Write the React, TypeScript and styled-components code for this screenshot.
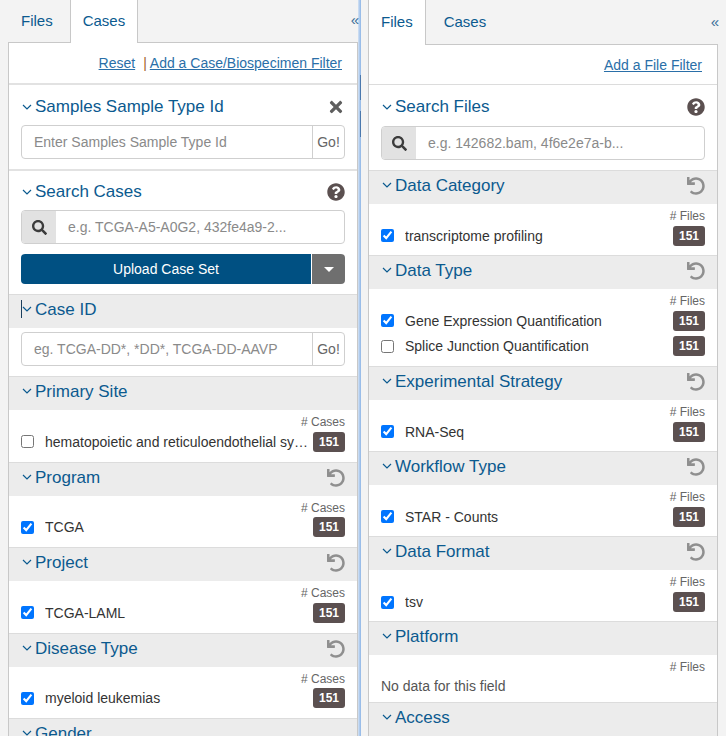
import { ReactNode } from "react";
import styled, { createGlobalStyle } from "styled-components";
import { FaQuestionCircle, FaSearch, FaTimes, FaUndo } from "react-icons/fa";

const GlobalStyle = createGlobalStyle`
  html, body {
    margin: 0;
    padding: 0;
    height: 736px;
    overflow: hidden;
    background: #f3f3f3;
    font-family: "Liberation Sans", Arial, sans-serif;
  }
`;

const Chevron = ({ focused }: { focused?: boolean }) => (
  <ChevronBox $focused={focused}>
    <svg width="10" height="6" viewBox="0 0 10 6" fill="none">
      <path d="M1 1l4 4 4-4" stroke="#0b5a8f" strokeWidth="1.2" />
    </svg>
  </ChevronBox>
);

const SectionTitle = ({
  label,
  gap,
  children,
}: {
  label: string;
  gap: number;
  children?: ReactNode;
}) => (
  <TitleRow $gap={gap}>
    <Chevron />
    <TitleText>{label}</TitleText>
    {children}
  </TitleRow>
);

type Row = { label: string; checked?: boolean };

const Facet = ({
  label,
  unit,
  rows,
  reset,
  tight,
}: {
  label: string;
  unit: string;
  rows: Row[];
  reset?: boolean;
  tight?: boolean;
}) => (
  <FacetBlock>
    <FacetHeader>
      <Chevron />
      <TitleText>{label}</TitleText>
      {reset && (
        <ResetIcon>
          <FaUndo size={18} />
        </ResetIcon>
      )}
    </FacetHeader>
    <FacetBody $tight={tight}>
      <UnitLabel># {unit}</UnitLabel>
      {rows.map((row) => (
        <FacetRow key={row.label}>
          <Check type="checkbox" checked={!!row.checked} readOnly />
          <RowLabel>{row.label}</RowLabel>
          <Count>151</Count>
        </FacetRow>
      ))}
    </FacetBody>
  </FacetBlock>
);

const SearchInput = ({ placeholder }: { placeholder: string }) => (
  <InputGroup>
    <SearchAddon>
      <FaSearch size={15} />
    </SearchAddon>
    <FieldText $inset={12}>{placeholder}</FieldText>
  </InputGroup>
);

const GoInput = ({ placeholder }: { placeholder: string }) => (
  <InputGroup>
    <FieldText $inset={12}>{placeholder}</FieldText>
    <GoButton>Go!</GoButton>
  </InputGroup>
);

export default function App() {
  return (
    <Page>
      <GlobalStyle />
      <Column>
        <TabBar>
          <Tab>Files</Tab>
          <Tab $active>Cases</Tab>
          <Collapse>«</Collapse>
        </TabBar>
        <Panel>
          <LinkBar>
            <PanelLink>Reset</PanelLink>
            <Pipe>|</Pipe>
            <PanelLink>Add a Case/Biospecimen Filter</PanelLink>
          </LinkBar>
          <PlainSection $height={86} $top={12} $ruled>
            <SectionTitle label="Samples Sample Type Id" gap={8}>
              <CloseIcon>
                <FaTimes size={18} />
              </CloseIcon>
            </SectionTitle>
            <GoInput placeholder="Enter Samples Sample Type Id" />
          </PlainSection>
          <PlainSection $height={123} $top={11}>
            <SectionTitle label="Search Cases" gap={8}>
              <HelpIcon>
                <FaQuestionCircle size={18} />
              </HelpIcon>
            </SectionTitle>
            <SearchInput placeholder="e.g. TCGA-A5-A0G2, 432fe4a9-2..." />
            <UploadRow>
              <UploadButton>Upload Case Set</UploadButton>
              <CaretButton>
                <Caret />
              </CaretButton>
            </UploadRow>
          </PlainSection>
          <FacetBlock>
            <FacetHeader>
              <Chevron focused />
              <TitleText>Case ID</TitleText>
            </FacetHeader>
            <CaseIdBody>
              <GoInput placeholder="eg. TCGA-DD*, *DD*, TCGA-DD-AAVP" />
            </CaseIdBody>
          </FacetBlock>
          <Facet
            label="Primary Site"
            unit="Cases"
            rows={[{ label: "hematopoietic and reticuloendothelial system" }]}
          />
          <Facet label="Program" unit="Cases" reset rows={[{ label: "TCGA", checked: true }]} />
          <Facet label="Project" unit="Cases" reset rows={[{ label: "TCGA-LAML", checked: true }]} />
          <Facet
            label="Disease Type"
            unit="Cases"
            reset
            rows={[{ label: "myeloid leukemias", checked: true }]}
          />
          <Facet label="Gender" unit="Cases" rows={[]} />
        </Panel>
      </Column>

      <Divider>
        <DividerTick $height={25} />
        <DividerTick $height={26} />
      </Divider>

      <Column $right>
        <TabBar $right>
          <Tab $active $right>
            Files
          </Tab>
          <Tab $right>Cases</Tab>
          <Collapse $right>«</Collapse>
        </TabBar>
        <Panel>
          <LinkBar $thin>
            <PanelLink>Add a File Filter</PanelLink>
          </LinkBar>
          <PlainSection $height={85} $top={12}>
            <SectionTitle label="Search Files" gap={9}>
              <HelpIcon>
                <FaQuestionCircle size={18} />
              </HelpIcon>
            </SectionTitle>
            <SearchInput placeholder="e.g. 142682.bam, 4f6e2e7a-b..." />
          </PlainSection>
          <Facet
            label="Data Category"
            unit="Files"
            reset
            tight
            rows={[{ label: "transcriptome profiling", checked: true }]}
          />
          <Facet
            label="Data Type"
            unit="Files"
            reset
            tight
            rows={[
              { label: "Gene Expression Quantification", checked: true },
              { label: "Splice Junction Quantification" },
            ]}
          />
          <Facet
            label="Experimental Strategy"
            unit="Files"
            reset
            tight
            rows={[{ label: "RNA-Seq", checked: true }]}
          />
          <Facet
            label="Workflow Type"
            unit="Files"
            reset
            tight
            rows={[{ label: "STAR - Counts", checked: true }]}
          />
          <Facet
            label="Data Format"
            unit="Files"
            reset
            tight
            rows={[{ label: "tsv", checked: true }]}
          />
          <FacetBlock>
            <FacetHeader>
              <Chevron />
              <TitleText>Platform</TitleText>
            </FacetHeader>
            <EmptyBody>
              <UnitLabel># Files</UnitLabel>
              <NoData>No data for this field</NoData>
            </EmptyBody>
          </FacetBlock>
          <FacetBlock>
            <FacetHeader>
              <Chevron />
              <TitleText>Access</TitleText>
            </FacetHeader>
          </FacetBlock>
        </Panel>
      </Column>
    </Page>
  );
}

const Page = styled.div`
  display: flex;
  width: 726px;
  height: 736px;
  overflow: hidden;
  background: #f3f3f3;
`;

const Column = styled.div<{ $right?: boolean }>`
  display: flex;
  flex-direction: column;
  flex: none;
  width: 350px;
  height: 736px;
  margin-left: ${(p) => (p.$right ? "7px" : "8px")};
`;

const Divider = styled.div`
  flex: none;
  width: 3px;
  height: 736px;
  box-sizing: border-box;
  padding-top: 75px;
  background: linear-gradient(to right, #d5e3f4, #a9c7ec 60%, #8fb6e6);
  display: flex;
  flex-direction: column;
  align-items: flex-end;
  gap: 11px;
`;

const DividerTick = styled.span<{ $height: number }>`
  width: 1px;
  height: ${(p) => p.$height}px;
  background: #4a78ad;
`;

const TabBar = styled.div<{ $right?: boolean }>`
  display: flex;
  flex: none;
  gap: ${(p) => (p.$right ? "5px" : "4px")};
  height: ${(p) => (p.$right ? "44px" : "42px")};
  position: relative;
  z-index: 1;
`;

const Tab = styled.div<{ $active?: boolean; $right?: boolean }>`
  box-sizing: border-box;
  height: calc(100% + 1px);
  padding: 0 ${(p) => (p.$active ? "12px" : "13px")} ${(p) => (p.$right ? "2px" : "3px")};
  display: flex;
  align-items: center;
  font-size: 15px;
  color: #0b5a8f;
  ${(p) =>
    p.$active
      ? `background: #fff;
         border: 1px solid #c8c8c8;
         border-top: none;
         border-bottom: none;`
      : ""}
`;

const Collapse = styled.span<{ $right?: boolean }>`
  margin-left: auto;
  margin-right: -1px;
  padding-bottom: ${(p) => (p.$right ? "2px" : "3px")};
  align-self: center;
  font-size: 15px;
  color: #3a6f9a;
`;

const Panel = styled.div`
  flex: 1;
  min-height: 0;
  overflow: hidden;
  background: #fff;
  border: 1px solid #c8c8c8;
  border-bottom: none;
  display: flex;
  flex-direction: column;
`;

const LinkBar = styled.div<{ $thin?: boolean }>`
  flex: none;
  box-sizing: border-box;
  height: ${(p) => (p.$thin ? "40px" : "42px")};
  padding-right: 15px;
  display: flex;
  justify-content: flex-end;
  align-items: center;
  border-bottom: ${(p) => (p.$thin ? "1px solid #dcdcdc" : "2px solid #e2e2e2")};
  font-size: 14px;
`;

const PanelLink = styled.a`
  color: #2a6fa8;
  text-decoration: underline;
`;

const Pipe = styled.span`
  color: #a0622a;
  margin: 0 3px 0 8px;
`;

const PlainSection = styled.section<{ $height: number; $top: number; $ruled?: boolean }>`
  flex: none;
  box-sizing: border-box;
  height: ${(p) => p.$height}px;
  padding: ${(p) => p.$top}px 12px 0;
  border-bottom: ${(p) => (p.$ruled ? "2px solid #e2e2e2" : "none")};
`;

const TitleRow = styled.div<{ $gap: number }>`
  display: flex;
  align-items: center;
  height: 20px;
  margin-bottom: ${(p) => p.$gap}px;
`;

const ChevronBox = styled.span<{ $focused?: boolean }>`
  flex: none;
  width: 14px;
  height: 18px;
  display: flex;
  align-items: center;
  padding-left: 1px;
  box-sizing: border-box;
  ${(p) => (p.$focused ? "box-shadow: inset 1px 0 #1c3f5c;" : "")}
`;

const TitleText = styled.span`
  font-size: 17px;
  line-height: 20px;
  color: #0b5a8f;
`;

const CloseIcon = styled.span`
  margin-left: auto;
  display: flex;
  color: #5e5e5e;
`;

const HelpIcon = styled.span`
  margin-left: auto;
  display: flex;
  color: #5b5050;
`;

const ResetIcon = styled.span`
  margin: 1px 0 0 auto;
  display: flex;
  color: #8f8f8f;
`;

const InputGroup = styled.div`
  box-sizing: border-box;
  height: 34px;
  display: flex;
  border: 1px solid #cfcfcf;
  border-radius: 4px;
  overflow: hidden;
  background: #fff;
`;

const SearchAddon = styled.span`
  flex: none;
  width: 34px;
  display: flex;
  align-items: center;
  justify-content: center;
  background: #e2e2e2;
  color: #3c3c3c;
`;

const FieldText = styled.span<{ $inset: number }>`
  flex: 1;
  min-width: 0;
  padding-left: ${(p) => p.$inset}px;
  display: flex;
  align-items: center;
  white-space: nowrap;
  font-size: 14px;
  color: #8a8a8a;
`;

const GoButton = styled.span`
  flex: none;
  width: 31px;
  border-left: 1px solid #cfcfcf;
  display: flex;
  align-items: center;
  justify-content: center;
  font-size: 14px;
  color: #666;
`;

const UploadRow = styled.div`
  display: flex;
  height: 30px;
  margin-top: 10px;
`;

const UploadButton = styled.div`
  flex: 1;
  display: flex;
  align-items: center;
  justify-content: center;
  background: #005082;
  color: #fff;
  font-size: 14px;
  border-radius: 4px 0 0 4px;
`;

const CaretButton = styled.div`
  flex: none;
  width: 33px;
  display: flex;
  align-items: center;
  justify-content: center;
  background: #6f6f6f;
  border-left: 1px solid #fff;
  border-radius: 0 4px 4px 0;
`;

const Caret = styled.span`
  width: 0;
  height: 0;
  border-left: 5px solid transparent;
  border-right: 5px solid transparent;
  border-top: 5px solid #fff;
`;

const FacetBlock = styled.section`
  flex: none;
  border-top: 1px solid #dcdcdc;
`;

const FacetHeader = styled.div`
  height: 33px;
  box-sizing: border-box;
  padding: 5px 12px 0;
  display: flex;
  align-items: flex-start;
  background: #ececec;
`;

const CaseIdBody = styled.div`
  height: 48px;
  box-sizing: border-box;
  padding: 4px 12px 0;
`;

const FacetBody = styled.div<{ $tight?: boolean }>`
  padding: 6px 12px ${(p) => (p.$tight ? "6.7px" : "7px")};
`;

const EmptyBody = styled.div`
  height: 47px;
  box-sizing: border-box;
  padding: 6px 12px 0;
`;

const UnitLabel = styled.div`
  font-size: 12px;
  line-height: 13px;
  text-align: right;
  color: #666;
`;

const FacetRow = styled.div`
  display: flex;
  align-items: center;
  height: 25.5px;
`;

const Check = styled.input`
  flex: none;
  width: 13px;
  height: 13px;
  margin: 0 11px 0 0;
`;

const RowLabel = styled.span`
  flex: 1;
  min-width: 0;
  overflow: hidden;
  white-space: nowrap;
  text-overflow: ellipsis;
  font-size: 14px;
  color: #333;
`;

const Count = styled.span`
  flex: none;
  width: 32px;
  height: 20px;
  margin-left: 4px;
  border-radius: 3px;
  background: #5b5050;
  color: #fff;
  font-size: 12px;
  font-weight: 700;
  display: flex;
  align-items: center;
  justify-content: center;
`;

const NoData = styled.div`
  font-size: 14px;
  line-height: 18px;
  margin-top: 3px;
  color: #555;
`;
